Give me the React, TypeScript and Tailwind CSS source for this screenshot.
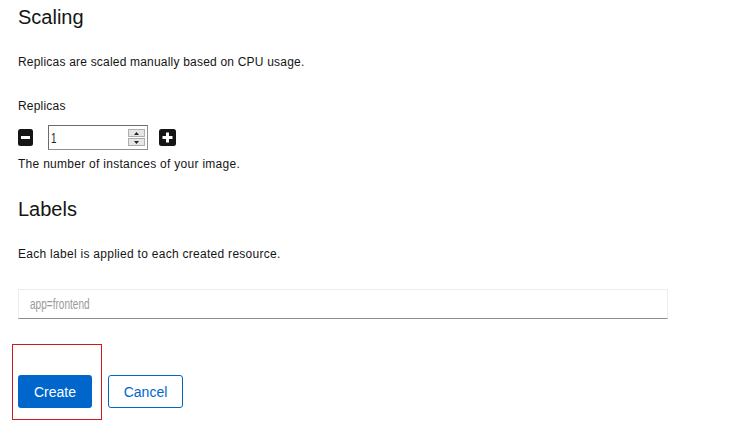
import React from "react";

function MinusSquare() {
  return (
    <svg width="15" height="17" viewBox="0 0 15 17" className="block">
      <rect x="0" y="0" width="15" height="17" rx="2.5" fill="#151515" />
      <rect x="3" y="7" width="9" height="3" fill="#ffffff" />
    </svg>
  );
}

function PlusSquare() {
  return (
    <svg width="17" height="17" viewBox="0 0 17 17" className="block">
      <rect x="0" y="0" width="17" height="17" rx="2.5" fill="#151515" />
      <rect x="3.5" y="7" width="10" height="3" fill="#ffffff" />
      <rect x="7" y="3.5" width="3" height="10" fill="#ffffff" />
    </svg>
  );
}

function Spinner() {
  return (
    <div className="flex flex-col gap-[1px]">
      <div className="w-[17px] h-[8px] bg-[#e6e6e6] border border-[#adadad] flex items-center justify-center">
        <svg width="5" height="3" viewBox="0 0 5 3" className="block">
          <polygon points="2.5,0 5,3 0,3" fill="#222" />
        </svg>
      </div>
      <div className="w-[17px] h-[8px] bg-[#e6e6e6] border border-[#adadad] flex items-center justify-center">
        <svg width="5" height="3" viewBox="0 0 5 3" className="block">
          <polygon points="0,0 5,0 2.5,3" fill="#222" />
        </svg>
      </div>
    </div>
  );
}

export default function App() {
  const sans = { fontFamily: '"Liberation Sans", Arial, sans-serif' };
  return (
    <div
      className="w-[739px] h-[433px] bg-white text-[#151515] overflow-hidden"
      style={sans}
    >
      <div className="pl-[18px] pt-[5px] flex flex-col">
        <h2 className="text-[20px] leading-[24px] font-normal">Scaling</h2>
        <p className="mt-[25px] text-[12px] leading-[16px] tracking-[0.2px]">
          Replicas are scaled manually based on CPU usage.
        </p>
        <label className="mt-[28px] text-[12px] leading-[16px] font-medium tracking-[0.2px]">
          Replicas
        </label>
        <div className="mt-[11px] flex items-center h-[25px]">
          <MinusSquare />
          <div className="ml-[15px] w-[100px] h-[25px] border border-[#8f8f8f] border-t-[#6b6b6b] border-l-[#6b6b6b] flex items-center justify-between pl-[2px] pr-[2px]">
            <span className="inline-block origin-left scale-x-[0.7] text-[14px] leading-[16px] text-[#222]">
              1
            </span>
            <Spinner />
          </div>
          <div className="ml-[11px]">
            <PlusSquare />
          </div>
        </div>
        <p className="mt-[6px] text-[12px] leading-[16px] tracking-[0.28px]">
          The number of instances of your image.
        </p>
        <h2 className="mt-[25px] text-[20px] leading-[24px] font-normal">Labels</h2>
        <p className="mt-[25px] text-[12px] leading-[16px] tracking-[0.28px]">
          Each label is applied to each created resource.
        </p>
        <div className="mt-[27px] w-[650px] h-[30px] border border-[#ededed] border-b-[#8a8d90] flex items-center pl-[11px]">
          <span className="inline-block origin-left scale-x-[0.72] text-[14px] leading-[16px] text-[#9a9a9a] whitespace-nowrap">
            app=frontend
          </span>
        </div>
        <div className="mt-[25px] -ml-[6px] flex items-start">
          <div className="w-[90px] h-[76px] border border-[#cc1a1a] pt-[30px] pl-[5px]">
            <button className="w-[74px] h-[33px] rounded-[3px] bg-[#0066cc] text-white text-[14px] leading-[16px] flex items-center justify-center">
              Create
            </button>
          </div>
          <button className="ml-[6px] mt-[31px] w-[75px] h-[33px] rounded-[3px] border border-[#0066cc] bg-white text-[#0066cc] text-[14px] leading-[16px] flex items-center justify-center">
            Cancel
          </button>
        </div>
      </div>
    </div>
  );
}
